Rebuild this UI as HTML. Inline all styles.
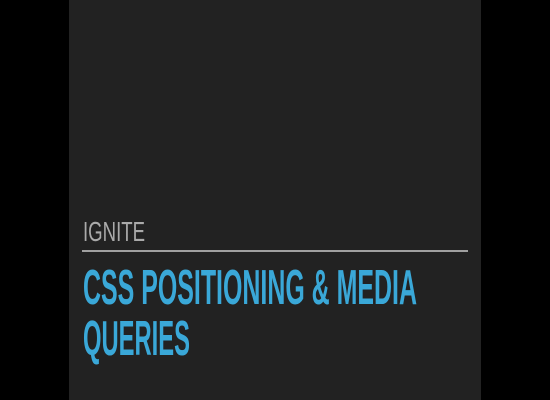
<!DOCTYPE html>
<html><head><meta charset="utf-8"><style>
html,body{margin:0;padding:0;background:#000;width:550px;height:400px;overflow:hidden}
</style></head><body>
<svg width="550" height="400" xmlns="http://www.w3.org/2000/svg" style="display:block">
<rect width="550" height="400" fill="#000"/>
<rect x="69" y="0" width="412" height="400" fill="#222222"/>
<text x="83" y="241" font-family="Liberation Sans, sans-serif" font-size="27.5" fill="#aaaaaa" textLength="62" lengthAdjust="spacingAndGlyphs">IGNITE</text>
<rect x="82" y="250" width="386" height="2" fill="#a0a0a0"/>
<text x="83" y="304" font-family="Liberation Sans, sans-serif" font-weight="bold" font-size="49.5" fill="#3aa8d8" textLength="334" lengthAdjust="spacingAndGlyphs">CSS POSITIONING &amp; MEDIA</text>
<text x="83" y="355" font-family="Liberation Sans, sans-serif" font-weight="bold" font-size="49.5" fill="#3aa8d8" textLength="107" lengthAdjust="spacingAndGlyphs">QUERIES</text>
</svg>
</body></html>
